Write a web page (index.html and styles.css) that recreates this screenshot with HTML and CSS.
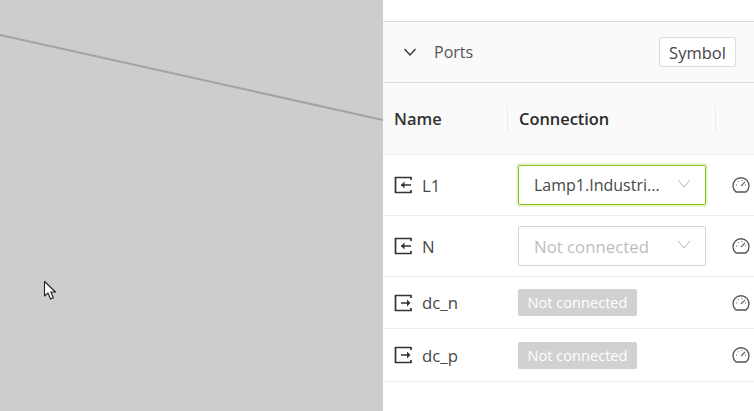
FILE: index.html
```html
<!DOCTYPE html>
<html lang="en">
<head>
<meta charset="utf-8">
<title>Ports</title>
<link rel="stylesheet" href="styles.css">
</head>
<body>
<div class="app">
  <div class="canvas">
    <svg class="wire" width="383" height="411" viewBox="0 0 383 411"><line x1="0" y1="35" x2="383" y2="120" stroke="#a3a3a3" stroke-width="2"/></svg>
    <svg class="cursor" width="14" height="22" viewBox="0 0 14 22"><path d="M1.500 1.500V16L5 13l2.500 6 2.800-1.200L7.800 12H12.500Z" fill="#fff" stroke="#222" stroke-width="1.100" stroke-linejoin="round"/></svg>
  </div>
  <aside class="panel">
    <div class="topbar"></div>
    <div class="section">
      <svg class="chev" width="14" height="10" viewBox="0 0 14 10"><path d="M1.500 2L7 8l5.500-6" fill="none" stroke="#333" stroke-width="1.300"/></svg>
      <span class="section-title">Ports</span>
      <button class="symbol">Symbol</button>
    </div>
    <div class="row head">
      <div class="c-name">Name</div>
      <div class="c-conn">Connection</div>
      <div class="c-act"></div>
    </div>
    <div class="row tall">
      <div class="c-name"><svg class="port" width="18" height="18" viewBox="0 0 18 18"><path d="M17 4V1.500H1.500v15H17V14M17 9H7" fill="none" stroke="#333" stroke-width="1.700"/><path d="M10.500 5.500L7 9l3.500 3.500Z" fill="#333"/></svg>L1</div>
      <div class="c-conn"><div class="select active"><span class="val">Lamp1.Industri...</span><svg class="caret" width="14" height="9" viewBox="0 0 14 9"><path d="M1 1l6 7 6-7" fill="none" stroke="#c2c2c2" stroke-width="1.100"/></svg></div></div>
      <div class="c-act"><svg class="gauge" width="18" height="16" viewBox="0 0 18 16"><path d="M4 15h10a8 8 0 1 0-10 0Z" fill="none" stroke="#555" stroke-width="1.300"/><path d="M9 9l4-4M4 8h1M6 4.500l.6.6M10 3v1M14 8h-1" stroke="#666" stroke-width="1.100" fill="none"/></svg></div>
    </div>
    <div class="row tall">
      <div class="c-name"><svg class="port" width="18" height="18" viewBox="0 0 18 18"><path d="M17 4V1.500H1.500v15H17V14M17 9H7" fill="none" stroke="#333" stroke-width="1.700"/><path d="M10.500 5.500L7 9l3.500 3.500Z" fill="#333"/></svg>N</div>
      <div class="c-conn"><div class="select"><span class="val muted">Not connected</span><svg class="caret" width="14" height="9" viewBox="0 0 14 9"><path d="M1 1l6 7 6-7" fill="none" stroke="#c2c2c2" stroke-width="1.100"/></svg></div></div>
      <div class="c-act"><svg class="gauge" width="18" height="16" viewBox="0 0 18 16"><path d="M4 15h10a8 8 0 1 0-10 0Z" fill="none" stroke="#555" stroke-width="1.300"/><path d="M9 9l4-4M4 8h1M6 4.500l.6.6M10 3v1M14 8h-1" stroke="#666" stroke-width="1.100" fill="none"/></svg></div>
    </div>
    <div class="row short">
      <div class="c-name"><svg class="port" width="18" height="18" viewBox="0 0 18 18"><path d="M17 4V1.500H1.500v15H17V14M7 9h7" fill="none" stroke="#333" stroke-width="1.700"/><path d="M13 5.500L16.500 9 13 12.500Z" fill="#333"/></svg>dc_n</div>
      <div class="c-conn"><span class="tag">Not connected</span></div>
      <div class="c-act"><svg class="gauge" width="18" height="16" viewBox="0 0 18 16"><path d="M4 15h10a8 8 0 1 0-10 0Z" fill="none" stroke="#555" stroke-width="1.300"/><path d="M9 9l4-4M4 8h1M6 4.500l.6.6M10 3v1M14 8h-1" stroke="#666" stroke-width="1.100" fill="none"/></svg></div>
    </div>
    <div class="row short">
      <div class="c-name"><svg class="port" width="18" height="18" viewBox="0 0 18 18"><path d="M17 4V1.500H1.500v15H17V14M7 9h7" fill="none" stroke="#333" stroke-width="1.700"/><path d="M13 5.500L16.500 9 13 12.500Z" fill="#333"/></svg>dc_p</div>
      <div class="c-conn"><span class="tag">Not connected</span></div>
      <div class="c-act"><svg class="gauge" width="18" height="16" viewBox="0 0 18 16"><path d="M4 15h10a8 8 0 1 0-10 0Z" fill="none" stroke="#555" stroke-width="1.300"/><path d="M9 9l4-4M4 8h1M6 4.500l.6.6M10 3v1M14 8h-1" stroke="#666" stroke-width="1.100" fill="none"/></svg></div>
    </div>
  </aside>
</div>
</body>
</html>
```
FILE: styles.css
```css
* { box-sizing: border-box; }
html, body { margin: 0; height: 100%; overflow: hidden; }
body { font-family: "Open Sans", "Noto Sans", sans-serif; color: #333; background: #fff; }
.app { display: flex; width: 754px; height: 411px; }
.canvas { position: relative; width: 383px; flex: none; background: #cdcdcd; }
.wire { position: absolute; left: 0; top: 0; }
.cursor { position: absolute; left: 43px; top: 280px; }
.panel { flex: 1; min-width: 0; background: #fff; }
.topbar { height: 22px; border-bottom: 1px solid #dcdcdc; }
.section { height: 61px; display: flex; align-items: center; padding: 0 18px 0 20px; background: #fafafa; border-bottom: 1px solid #dcdcdc; }
.chev { margin-right: 17px; }
.section-title { font-size: 16px; color: #555; flex: 1; }
.symbol { height: 30px; width: 77px; padding: 0; background: #fff; border: 1px solid #dcdcdc; border-radius: 2px; font: inherit; font-size: 16.500px; color: #444; }
.row { display: grid; grid-template-columns: 124px 1fr 39px; align-items: center; border-bottom: 1px solid #ececec; }
.head { height: 72px; background: #fafafa; font-weight: 600; }
.head .c-name { font-size: 16.500px; color: #333; }
.head .c-conn { font-size: 16.400px; color: #2b2b2b; padding-left: 11px; }
.head .c-conn, .head .c-act { height: 28px; border-left: 1px solid #ececec; display: flex; align-items: center; }
.tall { height: 61px; }
.short { height: 52px; }
.row:last-child { height: 53px; }
.c-name { display: flex; align-items: center; padding-left: 11px; font-size: 16.800px; color: #484848; }
.port { margin-right: 10px; flex: none; }
.c-conn { padding-left: 11px; }
.c-act { display: flex; padding-left: 17px; }
.gauge { display: block; }
.select { width: 188px; height: 40px; display: flex; align-items: center; justify-content: space-between; padding: 0 14px 0 15px; border: 1px solid #d4d4d4; border-radius: 2px; background: #fff; }
.select.active { border-color: #84c41a; box-shadow: 0 0 0 2px #e8f3d4; }
.caret { margin-bottom: 3px; }
.val { font-size: 16px; color: #484848; white-space: nowrap; }
.val.muted { font-size: 16.800px; color: #bdbdbd; }
.tag { display: inline-block; width: 119px; height: 27px; line-height: 27px; text-align: center; background: #d1d1d1; color: #fff; border-radius: 2px; font-size: 14.600px; white-space: nowrap; }
```
